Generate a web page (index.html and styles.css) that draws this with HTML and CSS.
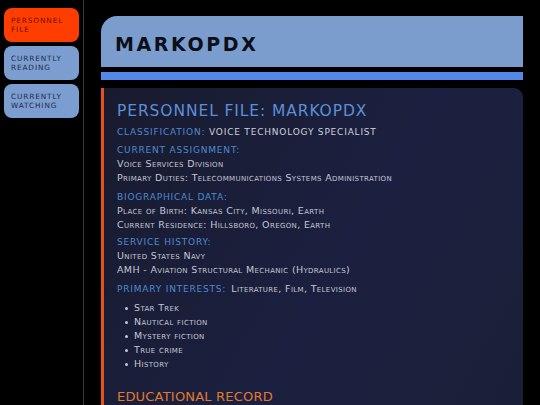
FILE: index.html
```html
<!DOCTYPE html>
<html>
<head>
<meta charset="utf-8">
<link rel="stylesheet" href="styles.css">
</head>
<body>
<div class="app">
  <nav class="sidebar">
    <div class="navbtn active">Personnel<br>File</div>
    <div class="navbtn">Currently<br>Reading</div>
    <div class="navbtn">Currently<br>Watching</div>
  </nav>
  <main class="main">
    <header class="header"><h1>MARKOPDX</h1></header>
    <div class="bar"></div>
    <section class="panel">
      <h2 class="title">Personnel File: MarkoPDX</h2>
      <p class="kv"><span class="label">Classification:</span> Voice Technology Specialist</p>
      <div class="section s1">
        <h3 class="label">Current Assignment:</h3>
        <p class="line">Voice Services Division</p>
        <p class="line">Primary Duties: Telecommunications Systems Administration</p>
      </div>
      <div class="section s2">
        <h3 class="label">Biographical Data:</h3>
        <p class="line">Place of Birth: Kansas City, Missouri, Earth</p>
        <p class="line">Current Residence: Hillsboro, Oregon, Earth</p>
      </div>
      <div class="section s3">
        <h3 class="label">Service History:</h3>
        <p class="line">United States Navy</p>
        <p class="line">AMH - Aviation Structural Mechanic (Hydraulics)</p>
      </div>
      <div class="section s4">
        <p class="interests"><span class="label">Primary Interests:</span> <span class="line">Literature, Film, Television</span></p>
        <ul class="list">
          <li>Star Trek</li>
          <li>Nautical fiction</li>
          <li>Mystery fiction</li>
          <li>True crime</li>
          <li>History</li>
        </ul>
      </div>
      <h2 class="edu">Educational Record</h2>
    </section>
  </main>
</div>
</body>
</html>
```
FILE: styles.css
```css
* { box-sizing: border-box; }
html, body { margin: 0; padding: 0; background: #000; height: 100%; overflow: hidden; }
body { font-family: "DejaVu Sans", sans-serif; color: #c3c7d6; }
.app { display: flex; height: 405px; overflow: hidden; }
.sidebar {
  width: 84px; flex: none;
  border-right: 1px solid #3a3a3e;
  padding: 8px 4px;
  display: flex; flex-direction: column; gap: 4px;
}
.navbtn {
  width: 75px; height: 34px;
  border-radius: 8px;
  background: #7b9dcf;
  color: #1f2b4c;
  font-size: 7.3px; line-height: 9px; letter-spacing: 0.9px;
  text-transform: uppercase;
  padding: 8px 7px 0;
}
.navbtn.active { background: #ff3d00; color: #6a1200; }
.main { flex: 1; padding: 16px 17px 0; min-width: 0; }
.header {
  height: 51px; background: #7b9dcd;
  border-radius: 16px 0 0 0;
  display: flex; align-items: center;
  padding: 4px 0 0 14px;
}
.header h1 { margin: 0; font-size: 19px; font-weight: bold; letter-spacing: 2.6px; color: #0c0f18; }
.bar { height: 8px; background: #5588e6; margin-top: 5px; }
.panel {
  margin-top: 8px; height: 330px;
  border-left: 3px solid #e8501e;
  border-radius: 0 9px 0 0;
  background: linear-gradient(120deg, #181b2e 0%, #1b2040 55%, #1a1f38 100%);
  padding: 13px 13px 0;
}
h2, h3, p, ul { margin: 0; font-weight: normal; }
.title { font-size: 15.5px; line-height: 20px; letter-spacing: 0.9px; text-transform: uppercase; color: #5c8fd8; }
.label { color: #4f8ad0; text-transform: uppercase; font-size: 9px; letter-spacing: 0.8px; line-height: 14px; }
.kv { margin-top: 4px; font-size: 9px; line-height: 14px; text-transform: uppercase; letter-spacing: 0.8px; color: #cdd1de; }
.s1 { margin-top: 4px; }
.s2 { margin-top: 5px; }
.s3 { margin-top: 3px; }
.s4 { margin-top: 3px; }
.line { font-size: 9.5px; line-height: 14px; font-variant: small-caps; letter-spacing: 0.35px; color: #c3c7d6; }
.interests { line-height: 14px; }
.list { list-style: none; padding: 0 0 0 8px; margin-top: 5px; }
.list li { font-size: 9.5px; line-height: 14px; font-variant: small-caps; letter-spacing: 0.35px; display: flex; align-items: center; gap: 6px; }
.list li::before { content: ""; width: 3px; height: 3px; border-radius: 50%; background: #c3c7d6; flex: none; }
.edu { margin-top: 16px; font-size: 13px; line-height: 20px; letter-spacing: 0.2px; text-transform: uppercase; color: #e27a2e; }
```
